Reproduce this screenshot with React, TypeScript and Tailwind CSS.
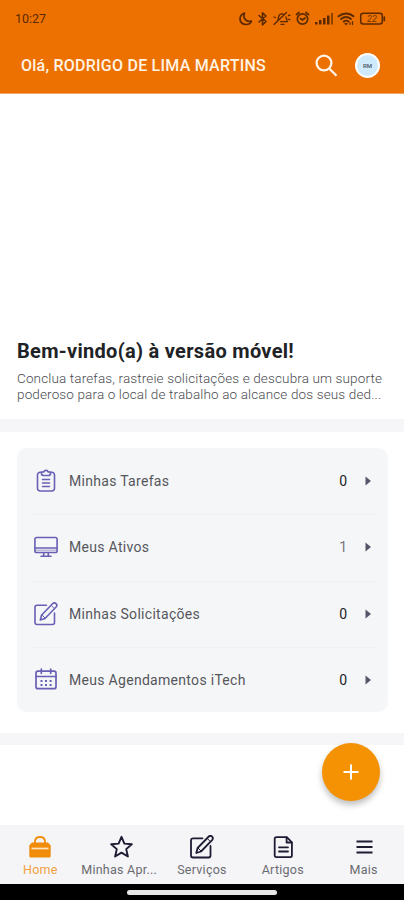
import type { ReactNode } from "react";

const stroke = {
  fill: "none",
  stroke: "currentColor",
  strokeLinecap: "round" as const,
  strokeLinejoin: "round" as const,
};

function StatusIcons() {
  return (
    <svg width="148" height="16" viewBox="238 11 148 16" {...stroke} strokeWidth="1.700">
      <path d="M244.5 13c-6 2.200-6.500 11 1.800 11.500 2.800 0 4.500-1.500 5.200-3.500-5 1.600-9-2.500-7-8z" />
      <path d="M259 15.500l7 6-3.500 3.300v-12l3.500 3.200-7 6" strokeWidth="1.600" />
      <path d="M274 24.500L286.500 12.500M277.500 20.500c1-1 .8-2.500 1.200-4 .6-2 2.300-3 4.300-2.500M286 17c.4 2.500.5 3.500 1.500 4.700h-7M281 24.300h3M274 17l1.500.5M288.500 15.500l1.500-.3M288 19l2 .8" strokeWidth="1.300" />
      <circle cx="302.500" cy="19" r="5.200" />
      <path d="M296.500 14.500l2.500-2M308.500 14.500l-2.500-2M300.500 18.500l2 1.500 2.500-2" />
      <g fill="currentColor" stroke="none">
        <rect x="315" y="22" width="2.500" height="2.500" />
        <rect x="319" y="20" width="2.500" height="4.500" />
        <rect x="323" y="18" width="2.500" height="6.500" />
        <rect x="327" y="15.500" width="2.500" height="9" />
        <rect x="331" y="13" width="2" height="11.500" opacity=".65" />
      </g>
      <path d="M338.500 16.300c4.500-3.700 11-3.700 15 0M341 19c3-2.400 7-2.400 10 0M343.700 21.500c1.600-1.200 3.200-1.200 4.800 0" strokeWidth="1.900" />
      <path d="M345 23.500l1 1 1-1M350 22.500v2M352.500 21.500v3" strokeWidth="1.200" />
      <rect x="360.700" y="13.200" width="21.600" height="10.800" rx="2.500" strokeWidth="1.500" />
      <path d="M384.300 17v3.500" strokeWidth="1.700" />
      <text x="367" y="22" fontSize="9" fill="currentColor" stroke="none" fontStyle="italic" opacity=".8">22</text>
    </svg>
  );
}

function SearchIcon() {
  return (
    <svg width="24" height="24" viewBox="0 0 24 24" {...stroke} strokeWidth="2.300" strokeLinecap="butt">
      <circle cx="10" cy="9" r="7.400" />
      <path d="M15.200 14.500l7.300 7.300" />
    </svg>
  );
}

function ClipboardIcon() {
  return (
    <svg width="24" height="24" viewBox="0 0 24 24" {...stroke} strokeWidth="1.600">
      <path d="M7.500 3.200H6.200A2.700 2.700 0 003.500 6v13.200A2.700 2.700 0 006.200 22h11.600a2.700 2.700 0 002.700-2.800V6a2.700 2.700 0 00-2.700-2.800h-1.300" />
      <path d="M7.500 3h2.300c.5-2.200 3.900-2.200 4.400 0h2.300v2.500l-1.500 1H9l-1.500-1z" />
      <path d="M8.500 10.500h7M8.500 14h7M8.500 17.500h7" />
    </svg>
  );
}

function MonitorIcon() {
  return (
    <svg width="24" height="24" viewBox="0 0 24 24" {...stroke} strokeWidth="1.600">
      <rect x=".9" y="2.500" width="22.200" height="15" rx="1.800" />
      <path d="M1 13h22M9.700 18v2.800M14.300 18v2.800M7 21.300h10" />
      <path d="M2 15.300h20" opacity=".4" />
    </svg>
  );
}

function EditIcon({ width = "1.600" }: { width?: string }) {
  return (
    <svg width="24" height="24" viewBox="0 0 24 24" {...stroke} strokeWidth={width}>
      <path d="M12.500 3.300H3a2 2 0 00-2 2V20.500a2 2 0 002 2h15.500a2 2 0 002-2V11" />
      <path d="M6.300 18l1.300-5L18.800 1.500c2-1.800 5.300.8 3.500 3.300L11 16.500z" />
      <path d="M17.300 3.500l3 3M8 13l3 3" strokeWidth="1" />
    </svg>
  );
}

function CalendarIcon() {
  return (
    <svg width="24" height="24" viewBox="0 0 24 24" {...stroke} strokeWidth="1.700">
      <rect x="2" y="3.200" width="20" height="17.500" rx="2" />
      <path d="M2 8.500h20M7.300 1v4.300M16.700 1v4.300" />
      <path d="M6.500 12.900h2M11 12.900h2M15.600 12.900h2M6.500 16.900h2M11 16.900h2M15.600 16.900h2" strokeLinecap="butt" strokeWidth="2" />
    </svg>
  );
}

function HomeIcon() {
  return (
    <svg width="24" height="24" viewBox="0 0 24 24" fill="none">
      <path d="M7 8.500V6.800C7 3.800 9 2 12 2S17 3.800 17 6.800v1.700" stroke="currentColor" strokeWidth="1.800" />
      <path d="M4 7.500h16l2.700 2.800v10.700a1.500 1.500 0 01-1.500 1.500H2.800A1.500 1.500 0 011.300 21V10.300z" fill="currentColor" />
      <path d="M3.500 13.500h17" stroke="#fbe3bd" strokeWidth="1.700" />
    </svg>
  );
}

function StarIcon() {
  return (
    <svg width="24" height="24" viewBox="0 0 24 24" {...stroke} strokeWidth="1.900">
      <path d="M12.500 1.800l2.900 6.800 7.400.6-5.600 4.900 1.700 7.400-6.400-3.900-6.400 3.900 1.700-7.400L2.200 9.200l7.400-.6z" />
    </svg>
  );
}

function ArticleIcon() {
  return (
    <svg width="24" height="24" viewBox="0 0 24 24" {...stroke} strokeWidth="1.800">
      <path d="M15.800 2.200H5.300a1.600 1.600 0 00-1.600 1.600v16.700a1.600 1.600 0 001.600 1.600h14a1.600 1.600 0 001.600-1.600V7.300z" />
      <path d="M15.600 2.500v5h5M8 12.300h9M8 16.500h9" />
    </svg>
  );
}

function MenuIcon() {
  return (
    <svg width="24" height="24" viewBox="0 0 24 24" {...stroke} strokeWidth="2" strokeLinecap="butt">
      <path d="M4.500 6.500h16M4.500 12h16M4.500 17.500h16" />
    </svg>
  );
}

type Row = { icon: ReactNode; label: string; count: number; muted?: boolean };

const rows: Row[] = [
  { icon: <ClipboardIcon />, label: "Minhas Tarefas", count: 0 },
  { icon: <MonitorIcon />, label: "Meus Ativos", count: 1, muted: true },
  { icon: <EditIcon />, label: "Minhas Solicitações", count: 0 },
  { icon: <CalendarIcon />, label: "Meus Agendamentos iTech", count: 0 },
];

const tabs = [
  { icon: <HomeIcon />, label: "Home", active: true },
  { icon: <StarIcon />, label: "Minhas Apr...", shift: "mr-[4px]" },
  { icon: <EditIcon width="1.800" />, label: "Serviços" },
  { icon: <ArticleIcon />, label: "Artigos" },
  { icon: <MenuIcon />, label: "Mais" },
];

export default function App() {
  return (
    <div className="relative flex h-[900px] w-[404px] flex-col overflow-hidden bg-white font-['Roboto',sans-serif] whitespace-nowrap">
      <header className="h-[94px] shrink-0 border-b border-[#f5a45c] bg-[#ec7100]">
        <div className="flex h-[37px] items-center justify-between pt-px pr-[18px] pl-[15px] text-[#5c2a00]">
          <span className="text-[12.5px] leading-4">10:27</span>
          <StatusIcons />
        </div>
        <div className="flex h-14 items-center pt-px pr-[24px] pl-[21px] text-[#fff3e6]">
          <h1 className="flex-1 text-base font-medium tracking-[0.24px]">Olá, RODRIGO DE LIMA MARTINS</h1>
          <SearchIcon />
          <div className="ml-[17px] flex size-[25px] items-center justify-center rounded-full border-2 border-white bg-[#cfeafa] text-[6px] font-medium text-[#47545f]">
            RM
          </div>
        </div>
      </header>

      <section className="flex h-[325px] shrink-0 flex-col justify-end px-[17px] pb-[17px]">
        <h2 className="text-xl leading-6 font-bold tracking-[0.3px] text-[#202226]">Bem-vindo(a) à versão móvel!</h2>
        <p className="mt-[7px] text-[13.5px] leading-4 font-light tracking-[0.14px] text-[#4a4c50]">
          Conclua tarefas, rastreie solicitações e descubra um suporte
          <br />
          poderoso para o local de trabalho ao alcance dos seus ded...
        </p>
      </section>

      <div className="h-[13px] shrink-0 bg-[#f6f6f8]" />

      <ul className="mr-4 mt-4 ml-[17px] h-[264px] shrink-0 rounded-[10px] bg-[#f5f6f8]">
        {rows.map((row, i) => (
          <li key={row.label} className="relative flex h-[66.3px] items-center pr-4 pl-[17px]">
            {i > 0 && <div className="absolute inset-x-3 top-0 h-px bg-[#f0f1f3]" />}
            <span className="text-[#6860b4]">{row.icon}</span>
            <span className="ml-[11px] flex-1 text-sm tracking-[0.3px] text-[#55575c]">{row.label}</span>
            <span className={`text-sm ${row.muted ? "text-[#77797e]" : "text-[#202226]"}`}>{row.count}</span>
            <svg className="ml-[18px]" width="7" height="10" viewBox="0 0 7 10">
              <path d="M.5.500L6 5 .5 9.500z" fill="#55566a" />
            </svg>
          </li>
        ))}
      </ul>

      <div className="mt-[21px] h-3 shrink-0 bg-[#f6f6f8]" />

      <button className="absolute top-[743px] left-[322px] flex size-[58px] items-center justify-center rounded-full bg-[#f49203] text-white shadow-[0_4px_6px_rgba(0,0,0,0.25)]">
        <svg width="16" height="16" viewBox="0 0 16 16">
          <path d="M8 .5v15M.5 8h15" stroke="currentColor" strokeWidth="2" />
        </svg>
      </button>

      <nav className="mt-auto grid h-[59px] shrink-0 grid-cols-5 bg-[#f5f5f8] pt-[10px]">
        {tabs.map((tab) => (
          <div
            key={tab.label}
            className={`flex flex-col items-center ${tab.active ? "text-[#f08c0c]" : "text-[#1d1c33]"}`}
          >
            {tab.icon}
            <span
              className={`mt-[3px] text-[12.5px] leading-4 tracking-[0.25px] ${tab.active ? "text-[#f3a23f]" : "text-[#6a6b70]"} ${tab.shift ?? ""}`}
            >
              {tab.label}
            </span>
          </div>
        ))}
      </nav>
      <div className="flex h-4 shrink-0 justify-center bg-black pt-[6px]">
        <div className="h-[5px] w-[150px] rounded-full bg-[#e8e8e8]" />
      </div>
    </div>
  );
}
